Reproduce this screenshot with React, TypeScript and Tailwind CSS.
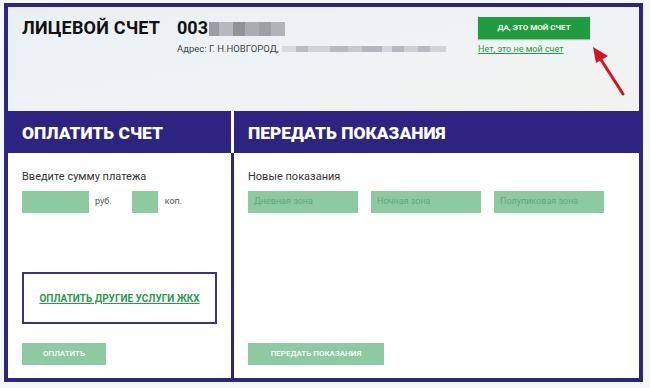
import React from "react";

const font = { fontFamily: "Roboto, 'Liberation Sans', Arial, sans-serif" };

const Blur: React.FC<{ blocks: { w: number; c: string }[]; h: number }> = ({ blocks, h }) => (
  <div className="flex blur-[0.6px]">
    {blocks.map((b, i) => (
      <div key={i} style={{ width: b.w, height: h, background: b.c }} />
    ))}
  </div>
);

const Arrow = () => (
  <svg className="absolute left-[577px] top-[36px]" width="46" height="58" viewBox="0 0 46 58">
    <line x1="38" y1="51" x2="13" y2="12" stroke="#d4151f" strokeWidth="3" strokeLinecap="round" />
    <polygon points="8,4 23,13 11,20" fill="#d4151f" />
  </svg>
);

export default function App() {
  return (
    <div className="w-[650px] h-[388px] bg-[#f4f6f8] pt-[3px] pl-[4px]" style={font}>
      <div className="relative w-[639px] h-[379px] border-4 border-[#2d2482] bg-[#2d2482] flex flex-col">
        {/* account header */}
        <div className="h-[104px] shrink-0 bg-gradient-to-br from-[#e9eff3] via-[#eef3f5] to-[#f3f3ef] flex pl-[14px] pt-[10px]">
          <h1 className="text-[18px] font-bold text-[#111] tracking-[0.2px] w-[155px] leading-[22px]">ЛИЦЕВОЙ СЧЕТ</h1>
          <div className="w-[301px]">
            <div className="flex items-center h-[22px]">
              <span className="text-[18px] font-bold text-[#111] leading-[22px]">003</span>
              <div className="ml-[1px] mt-[2px]">
                <Blur
                  h={14}
                  blocks={[
                    { w: 10, c: "#9a9ea3" },
                    { w: 14, c: "#b6babe" },
                    { w: 12, c: "#8f9398" },
                    { w: 14, c: "#a9adb1" },
                    { w: 12, c: "#9ca0a4" },
                    { w: 14, c: "#b0b4b8" },
                  ]}
                />
              </div>
            </div>
            <div className="flex items-center mt-[3px] text-[9.5px] text-[#444]">
              <span>Адрес: Г. Н.НОВГОРОД,</span>
              <div className="ml-[3px]">
                <Blur
                  h={6}
                  blocks={[
                    { w: 14, c: "#d7dadd" },
                    { w: 12, c: "#b9bdc1" },
                    { w: 22, c: "#d0d3d6" },
                    { w: 18, c: "#b6babe" },
                    { w: 14, c: "#c6c9cc" },
                    { w: 20, c: "#b3b7bb" },
                    { w: 10, c: "#d4d7da" },
                    { w: 12, c: "#b5b9bd" },
                    { w: 14, c: "#cdd0d3" },
                    { w: 12, c: "#b7bbbf" },
                    { w: 16, c: "#d2d5d8" },
                  ]}
                />
              </div>
            </div>
          </div>
          <div>
            <button className="block w-[112px] h-[22px] bg-[#1f9c3e] text-white text-[8px] font-bold shadow-[0_1px_1px_rgba(0,0,0,0.25)]">
              ДА, ЭТО МОЙ СЧЕТ
            </button>
            <a className="block mt-[4px] text-[9px] text-[#2a9a4a] underline">Нет, это не мой счет</a>
          </div>
        </div>

        {/* two panels */}
        <div className="flex flex-1">
          <section className="w-[223px] flex flex-col">
            <div className="h-[42px] flex items-center pl-[14px] pt-[3px]">
              <h2 className="text-[17.4px] font-black text-white">ОПЛАТИТЬ СЧЕТ</h2>
            </div>
            <div className="flex-1 bg-white px-[14px] pt-[17px]">
              <p className="text-[11px] text-[#333] leading-[14px]">Введите сумму платежа</p>
              <div className="flex items-center mt-[7px] text-[9px] text-[#555]">
                <div className="w-[67px] h-[22px] bg-[#8dc9a1]" />
                <span className="ml-[6px]">руб.</span>
                <div className="w-[26px] h-[22px] bg-[#8dc9a1] ml-[20px]" />
                <span className="ml-[7px]">коп.</span>
              </div>
              <div className="mt-[59px] w-[195px] h-[52px] border-2 border-[#3a3380] flex items-center justify-center">
                <a className="text-[10px] font-bold text-[#2a9a4a] underline">ОПЛАТИТЬ ДРУГИЕ УСЛУГИ ЖКХ</a>
              </div>
              <button className="mt-[19px] w-[84px] h-[22px] bg-[#8dc9a1] text-white text-[8px] font-medium">
                ОПЛАТИТЬ
              </button>
            </div>
          </section>

          <section className="flex-1 flex flex-col ml-[3px]">
            <div className="h-[42px] flex items-center pl-[14px] pt-[3px] border-l-[3px] border-white -ml-[3px]">
              <h2 className="text-[17.4px] font-black text-white">ПЕРЕДАТЬ ПОКАЗАНИЯ</h2>
            </div>
            <div className="flex-1 bg-white px-[14px] pt-[17px] flex flex-col">
              <p className="text-[11px] text-[#333] leading-[14px]">Новые показания</p>
              <div className="flex gap-[13px] mt-[7px]">
                {["Дневная зона", "Ночная зона", "Полупиковая зона"].map((p) => (
                  <div key={p} className="w-[110px] h-[22px] bg-[#8dc9a1] flex items-center pl-[6px] text-[9px] text-[#62aa7b]">
                    {p}
                  </div>
                ))}
              </div>
              <button className="mt-[130px] w-[136px] h-[22px] bg-[#8dc9a1] text-white text-[8px] font-medium">
                ПЕРЕДАТЬ ПОКАЗАНИЯ
              </button>
            </div>
          </section>
        </div>
        <Arrow />
      </div>
    </div>
  );
}
